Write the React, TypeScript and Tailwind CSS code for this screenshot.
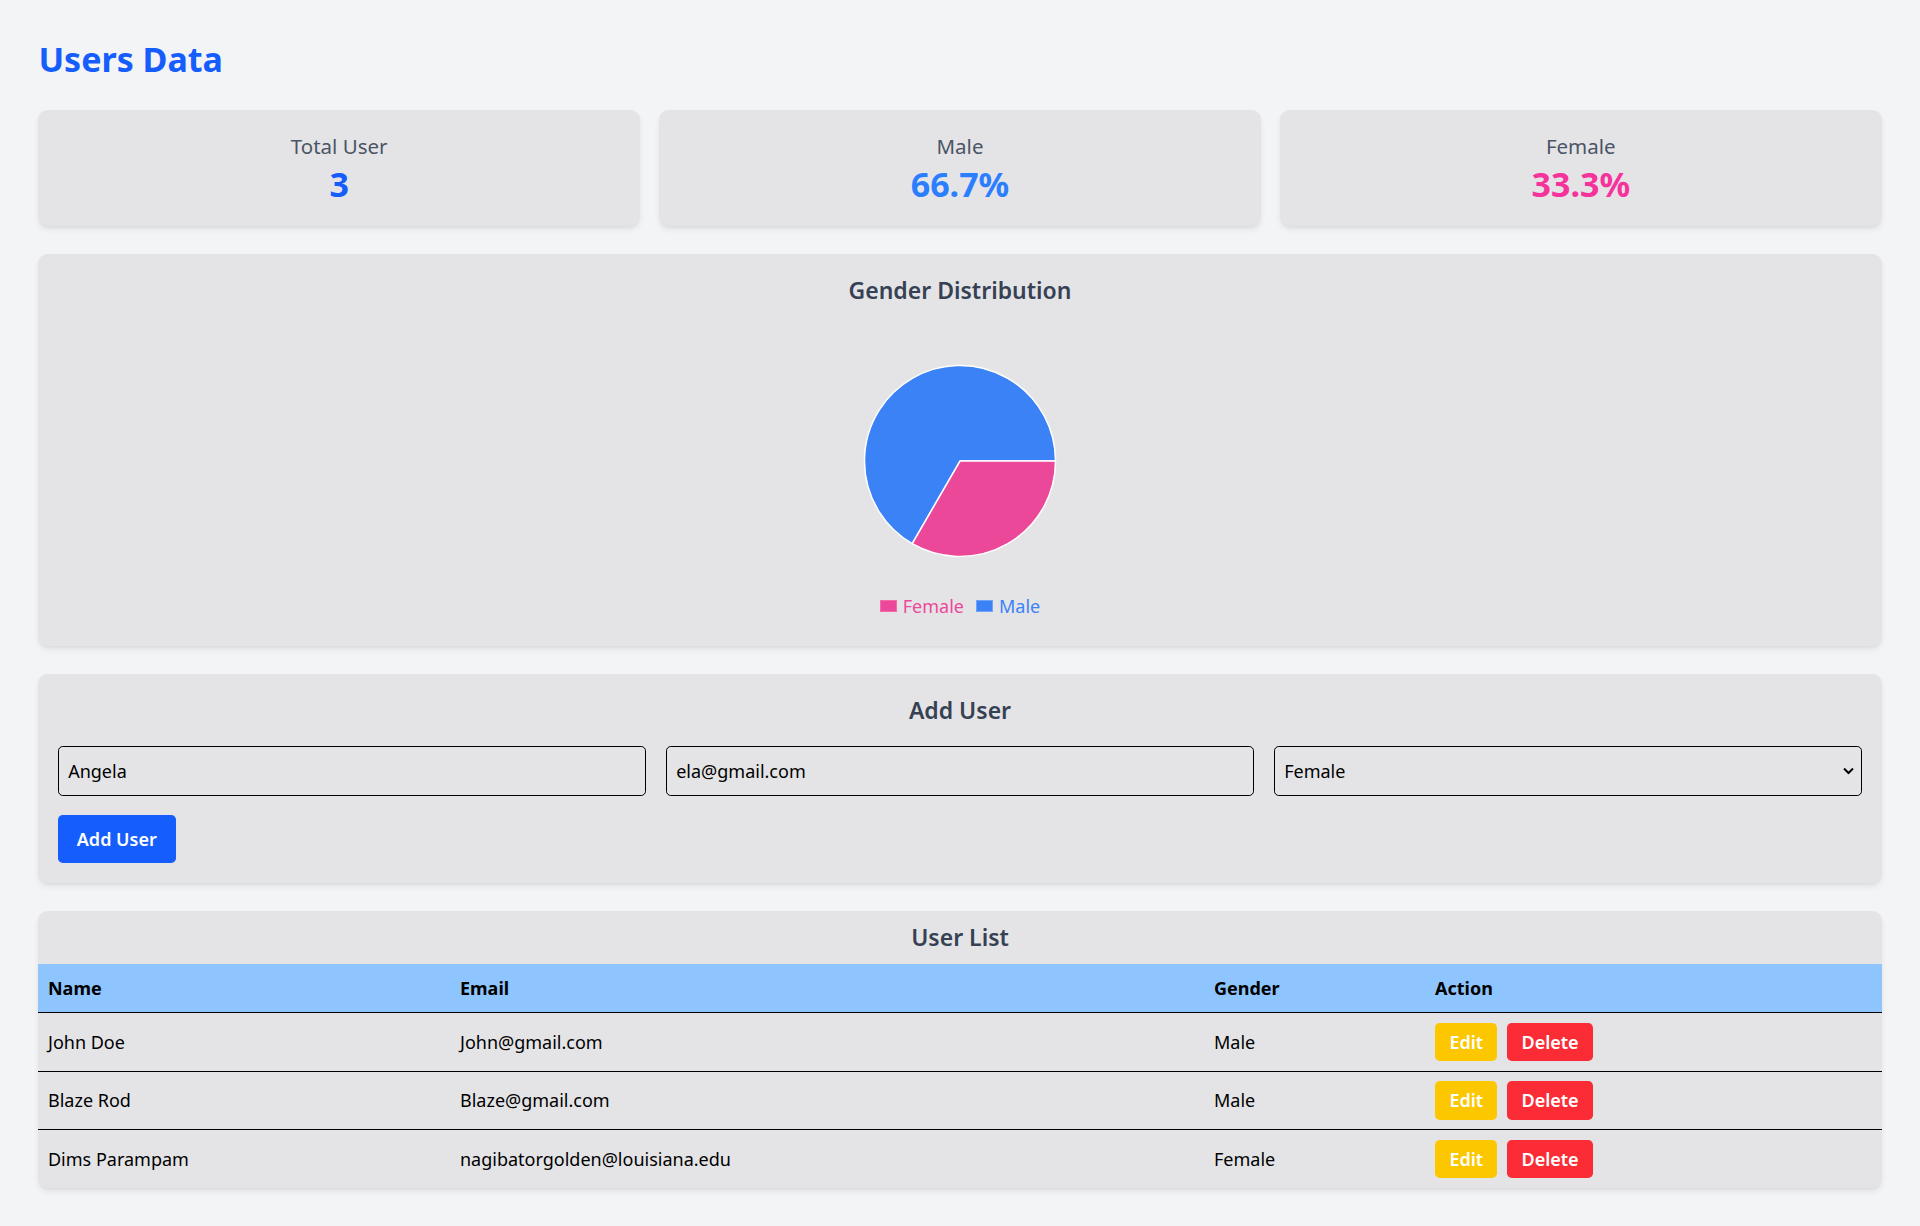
import React from "react";

const users = [
  { name: "John Doe", email: "John@gmail.com", gender: "Male" },
  { name: "Blaze Rod", email: "Blaze@gmail.com", gender: "Male" },
  { name: "Dims Parampam", email: "nagibatorgolden@louisiana.edu", gender: "Female" },
];

function StatCard({ label, value, color }: { label: string; value: string; color: string }) {
  return (
    <div className="rounded-[9.6px] bg-[#e4e4e7] p-[19.2px] text-center shadow-[0_4px_7px_-1px_rgba(0,0,0,0.08),0_2px_4px_-2px_rgba(0,0,0,0.08)]">
      <div className="text-[20.5px] leading-[33.6px] text-[#4a5565]">{label}</div>
      <div className={`text-[34px] font-bold leading-[43.2px] ${color}`}>{value}</div>
    </div>
  );
}

function Pie() {
  const c = 97;
  const r = 95.5;
  const a = (120 * Math.PI) / 180;
  const x2 = c + r * Math.cos(a);
  const y2 = c + r * Math.sin(a);
  return (
    <svg width="194" height="194" viewBox="0 0 194 194">
      <path
        d={`M${c} ${c} L${c + r} ${c} A${r} ${r} 0 1 0 ${x2} ${y2} Z`}
        fill="#3b82f6"
        stroke="#ffffff"
        strokeWidth="1.5"
        strokeLinejoin="round"
      />
      <path
        d={`M${c} ${c} L${c + r} ${c} A${r} ${r} 0 0 1 ${x2} ${y2} Z`}
        fill="#ec4899"
        stroke="#ffffff"
        strokeWidth="1.5"
        strokeLinejoin="round"
      />
    </svg>
  );
}

const card =
  "rounded-[9.6px] bg-[#e4e4e7] shadow-[0_4px_7px_-1px_rgba(0,0,0,0.08),0_2px_4px_-2px_rgba(0,0,0,0.08)]";

export default function App() {
  return (
    <div
      className="min-h-screen bg-[#f3f4f6] p-[38.4px] text-black"
      style={{ fontFamily: '"Noto Sans", "Open Sans", sans-serif' }}
    >
      <h1 className="mb-[28.8px] text-[34px] font-bold leading-[43.2px] text-[#155dfc]">Users Data</h1>

      <div className="mb-[28.8px] grid grid-cols-3 gap-[19.2px]">
        <StatCard label="Total User" value="3" color="text-[#155dfc]" />
        <StatCard label="Male" value="66.7%" color="text-[#2b7fff]" />
        <StatCard label="Female" value="33.3%" color="text-[#f6339a]" />
      </div>

      <div className={`mb-[28.8px] p-[19.2px] ${card}`}>
        <h2 className="mb-[19.2px] text-center text-[23px] font-semibold leading-[33.6px] text-[#364153]">
          Gender Distribution
        </h2>
        <div className="flex h-[300px] flex-col items-center pt-[38px]">
          <Pie />
          <div className="mt-[36px] flex items-center text-[18px] leading-[24px]">
            <span className="mr-[6px] h-[12px] w-[17px] border border-[#f06ba8] bg-[#ec4899]" />
            <span className="mr-[12px] text-[#ec4899]">Female</span>
            <span className="mr-[6px] h-[12px] w-[17px] border border-[#6ea3f8] bg-[#3b82f6]" />
            <span className="text-[#3b82f6]">Male</span>
          </div>
        </div>
      </div>

      <div className={`mb-[28.8px] p-[19.2px] ${card}`}>
        <h2 className="mb-[19.2px] text-center text-[23px] font-semibold leading-[33.6px] text-[#364153]">
          Add User
        </h2>
        <div className="mb-[19.2px] grid grid-cols-3 gap-[19.2px]">
          <input
            defaultValue="Angela"
            className="rounded-[4.8px] border border-black bg-transparent px-[9.6px] py-[9.6px] text-[18px] leading-[28.8px] outline-none"
          />
          <input
            defaultValue="ela@gmail.com"
            className="rounded-[4.8px] border border-black bg-transparent px-[9.6px] py-[9.6px] text-[18px] leading-[28.8px] outline-none"
          />
          <div className="relative">
            <select
              defaultValue="Female"
              className="w-full appearance-none rounded-[4.8px] border border-black bg-transparent px-[9.6px] py-[9.6px] text-[18px] leading-[28.8px] outline-none"
            >
              <option>Male</option>
              <option>Female</option>
            </select>
            <svg
              className="pointer-events-none absolute right-[8px] top-1/2 -translate-y-1/2"
              width="11"
              height="7"
              viewBox="0 0 11 7"
            >
              <path d="M1 1 L5.5 5.5 L10 1" fill="none" stroke="#000" strokeWidth="2" />
            </svg>
          </div>
        </div>
        <button className="rounded-[4.8px] bg-[#155dfc] px-[19.2px] py-[9.6px] text-[18px] font-semibold leading-[28.8px] text-white">
          Add User
        </button>
      </div>

      <div className={`overflow-hidden ${card}`}>
        <h2 className="py-[9.6px] text-center text-[23px] font-semibold leading-[33.6px] text-[#364153]">User List</h2>
        <table className="w-full table-fixed border-collapse text-left text-[18px] leading-[28.8px]">
          <colgroup>
            <col className="w-[412px]" />
            <col className="w-[754px]" />
            <col className="w-[221px]" />
            <col />
          </colgroup>
          <thead>
            <tr className="bg-[#8ec5ff]">
              <th className="p-[9.6px] font-bold">Name</th>
              <th className="p-[9.6px] font-bold">Email</th>
              <th className="p-[9.6px] font-bold">Gender</th>
              <th className="p-[9.6px] font-bold">Action</th>
            </tr>
          </thead>
          <tbody>
            {users.map((u) => (
              <tr key={u.email} className="border-t border-black">
                <td className="p-[9.6px]">{u.name}</td>
                <td className="p-[9.6px]">{u.email}</td>
                <td className="p-[9.6px]">{u.gender}</td>
                <td className="p-[9.6px]">
                  <div className="flex gap-[9.6px]">
                    <button className="rounded-[4.8px] bg-[#fdc700] px-[14.4px] py-[4.8px] font-semibold text-white">
                      Edit
                    </button>
                    <button className="rounded-[4.8px] bg-[#fb2c36] px-[14.4px] py-[4.8px] font-semibold text-white">
                      Delete
                    </button>
                  </div>
                </td>
              </tr>
            ))}
          </tbody>
        </table>
      </div>
    </div>
  );
}
